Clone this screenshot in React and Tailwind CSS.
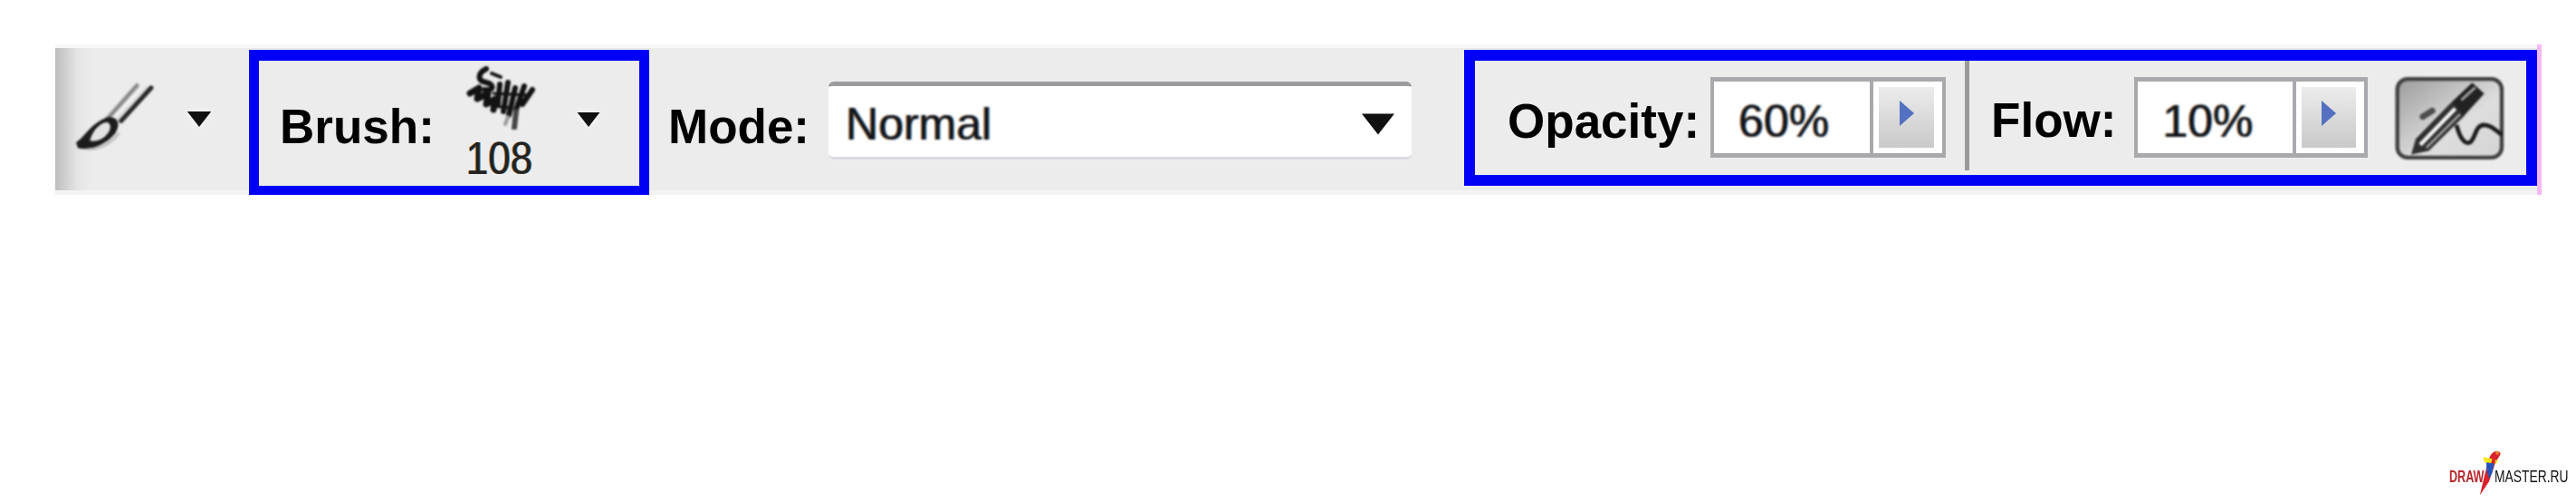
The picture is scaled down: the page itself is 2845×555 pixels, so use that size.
const Triangle = ({ className }) => (
    <svg viewBox="0 0 28 18" className={`block ${className}`}>
        <polygon points="0,0 28,0 14,18" fill="#111" />
    </svg>
)

const BrushIcon = () => (
    <svg viewBox="60 120 280 240" className="block w-[93px] h-[80px] blur-[1px]">
        <path d="M165 240 L262 132 L325 138 L222 262 Z" fill="#dcdcdc" />
        <line x1="175" y1="245" x2="275" y2="132" stroke="#8a8a8a" strokeWidth="13" strokeLinecap="round" />
        <line x1="222" y1="250" x2="322" y2="140" stroke="#2a2a2a" strokeWidth="15" strokeLinecap="round" />
        <line x1="198" y1="240" x2="296" y2="136" stroke="#f2f2f2" strokeWidth="10" />
        <path d="M72 322 C105 300 120 258 178 238 C212 235 222 262 202 292 C170 332 112 352 78 340 Z" fill="#1c1c1c" />
        <path d="M118 316 C126 285 146 258 176 254 C192 262 188 282 170 300 C155 314 136 320 118 316 Z" fill="#e4e4e4" />
        <path d="M110 345 C150 345 190 325 215 290" fill="none" stroke="#bdbdbd" strokeWidth="8" />
    </svg>
)

const StampIcon = () => (
    <svg viewBox="0 0 80 70" className="block w-[80px] h-[70px] blur-[1.1px]" fill="none" stroke="#121212" strokeLinecap="round" strokeLinejoin="round">
        <path d="M22 3 C12 8 12 16 22 18 C32 20 30 28 20 26" strokeWidth="6" />
        <path d="M28 8 L38 12" strokeWidth="4" />
        <path d="M4 30 L14 24 L12 36 L24 30 L22 42 L32 36 L30 48" strokeWidth="7" />
        <path d="M37 20 L35 42 M46 18 L41 50 M54 24 L47 54 M64 22 L55 48 M73 26 L62 42" strokeWidth="6" />
        <path d="M30 30 L68 32 M28 44 L50 46" strokeWidth="3" />
        <path d="M55 50 L53 68" strokeWidth="6" stroke="#444" />
        <path d="M46 56 L43 64" strokeWidth="4" stroke="#999" />
    </svg>
)

const PenIcon = () => (
    <svg viewBox="70 65 375 290" className="block w-[125px] h-[97px] blur-[1.2px]">
        <defs>
            <linearGradient id="penbg" x1="0" y1="0" x2="1" y2="1">
                <stop offset="0" stopColor="#9c9c9c" />
                <stop offset="0.6" stopColor="#dedede" />
                <stop offset="1" stopColor="#d4d4d4" />
            </linearGradient>
        </defs>
        <rect x="84" y="80" width="346" height="260" rx="34" fill="url(#penbg)" stroke="#404040" strokeWidth="13" />
        <path d="M168 205 L200 185" stroke="#4c4c4c" strokeWidth="20" strokeLinecap="round" />
        <path d="M280 232 C290 270 305 298 325 290 C345 275 340 235 370 232 C395 232 410 250 430 265" fill="none" stroke="#1c1c1c" strokeWidth="14" />
        <path d="M130 330 L145 278 L262 158 L308 200 L188 318 Z" fill="#303030" />
        <path d="M160 298 L276 178" stroke="#f4f4f4" strokeWidth="13" />
        <path d="M180 308 L292 196" stroke="#a0a0a0" strokeWidth="8" />
        <path d="M262 158 L332 92 L372 128 L305 202 Z" fill="#222" />
        <path d="M296 150 L342 108" stroke="#a4a4a4" strokeWidth="9" />
    </svg>
)

const Parrot = () => (
    <svg viewBox="170 50 80 160" className="block w-[27px] h-[53px] -mx-[6px] shrink-0">
        <path d="M175 205 L190 140 L205 85 C212 60 235 50 244 66 C240 80 228 88 222 110 L205 160 Z" fill="#d8222c" />
        <path d="M186 78 L216 84 L212 98 L190 96 Z M226 86 L236 92 L226 102 Z" fill="#f5e71a" />
        <path d="M196 96 L222 100 L216 130 L206 150 L198 125 Z" fill="#2454b8" />
        <circle cx="233" cy="64" r="6" fill="#e8842a" />
    </svg>
)

const SpinBox = ({ value, width, fieldWidth, pad }) => (
    <div className={`flex shrink-0 h-[89px] border-x-[4px] border-t-[5px] border-b-[5px] border-[#a9a9ad] ${width}`}>
        <div className={`bg-white flex items-center pt-[8px] font-['Liberation_Sans',sans-serif] text-[50px] leading-none ${fieldWidth} ${pad}`}>
            <span className="blur-[0.8px] text-[#10131c] [text-shadow:-1px_0_#d9822b,1px_0_#3a8fd0]">{value}</span>
        </div>
        <div className="flex-1 border-l-[4px] border-[#a9a9ad] bg-white pl-[6px] pr-[9px] pt-[6px] pb-[6px]">
            <div className="h-full bg-gradient-to-b from-[#ececec] to-[#c9c9c9] flex items-start justify-center pt-[15px]">
                <svg viewBox="0 0 16 28" className="block w-[16px] h-[28px] blur-[0.6px]">
                    <polygon points="0,0 16,14 0,28" fill="#5470c0" />
                </svg>
            </div>
        </div>
    </div>
)

const labelClass = "shrink-0 blur-[0.4px] font-['Liberation_Sans',sans-serif] font-bold text-[53px] leading-none text-black"

const App = () => {
    return (
        <div className="w-[2845px] h-[555px] bg-white flex flex-col overflow-hidden">
            <section className="flex items-start ml-[61px] mt-[49px] w-[2746px] h-[166px] bg-[linear-gradient(90deg,#bdbdbd_0,#e4e4e4_24px,#ececec_40px)] shadow-[inset_0_4px_0_#f7f7f5,inset_0_-5px_0_#f4f4f4,inset_0_-1px_0_#c4c4c4]">
                {/* tool preset */}
                <div className="flex w-[214px] shrink-0 pt-[41px] pl-[19px]">
                    <BrushIcon />
                    <Triangle className="w-[28px] h-[17px] mt-[33px] ml-[33px] blur-[0.6px] drop-shadow-[0_0_3px_#fff]" />
                </div>

                {/* brush */}
                <div className="flex shrink-0 w-[442px] h-[160px] mt-[6px] border-[11px] border-t-[12px] border-b-[10px] border-[#0000f6]">
                    <div className={`${labelClass} ml-[23px] mt-[46px]`}>Brush:</div>
                    <div className="w-[80px] ml-[35px] mt-[6px] shrink-0">
                        <StampIcon />
                        <div className="mt-[8px] w-[74px] origin-top-left scale-y-[1.12] blur-[0.7px] font-['Liberation_Sans',sans-serif] text-[44px] leading-none text-[#222] [text-shadow:-1px_0_#d9822b,1px_0_#3a8fd0]">108</div>
                    </div>
                    <Triangle className="w-[26px] h-[16px] mt-[57px] ml-[42px] blur-[0.6px] drop-shadow-[0_0_3px_#fff]" />
                </div>

                {/* mode */}
                <div className={`${labelClass} ml-[21px] mt-[64px]`}>Mode:</div>
                <div className="flex items-center justify-between w-[644px] h-[86px] shrink-0 ml-[21px] mt-[41px] bg-white rounded-[6px] border-t-[5px] border-b-[3px] border-t-[#9c9ca0] border-b-[#dcdce2] pl-[19px] pr-[19px]">
                    <span className="mt-[6px] blur-[0.8px] font-['Liberation_Sans',sans-serif] text-[50px] leading-none text-[#10131c] [text-shadow:-1px_0_#d9822b,1px_0_#3a8fd0]">Normal</span>
                    <Triangle className="w-[36px] h-[24px] mt-[6px] blur-[0.5px]" />
                </div>

                {/* opacity and flow */}
                <div className="flex shrink-0 w-[1185px] h-[150px] ml-[58px] mt-[6px] border-[12px] border-[#0000f6]">
                    <div className={`${labelClass} ml-[36px] mt-[40px]`}>Opacity:</div>
                    <div className="ml-[12px] mt-[18px]">
                        <SpinBox value="60%" width="w-[260px]" fieldWidth="w-[172px]" pad="pl-[27px]" />
                    </div>
                    <div className="w-[5px] h-[121px] ml-[21px] shrink-0 bg-[#9a9a9a]"></div>
                    <div className={`${labelClass} ml-[24px] mt-[39px]`}>Flow:</div>
                    <div className="ml-[20px] mt-[18px]">
                        <SpinBox value="10%" width="w-[258px]" fieldWidth="w-[171px]" pad="pl-[27px]" />
                    </div>
                    <div className="ml-[28px] mt-[15px] shrink-0">
                        <PenIcon />
                    </div>
                </div>
                <div className="w-[5px] h-full shrink-0 bg-[#f5b8f5]"></div>
            </section>

            {/* watermark */}
            <div className="mt-auto mb-[7px] mr-[8px] flex items-end justify-end">
                <span className="w-[38px] mb-[13px] origin-left scale-x-[0.7] font-['Liberation_Sans',sans-serif] font-bold text-[18px] leading-none text-[#b8262c]">DRAW</span>
                <Parrot />
                <span className="w-[82px] mb-[13px] ml-[-3px] whitespace-nowrap origin-left scale-x-[0.77] font-['Liberation_Sans',sans-serif] text-[18px] leading-none text-[#111]">MASTER.RU</span>
            </div>
        </div>
    )
}

export default App
